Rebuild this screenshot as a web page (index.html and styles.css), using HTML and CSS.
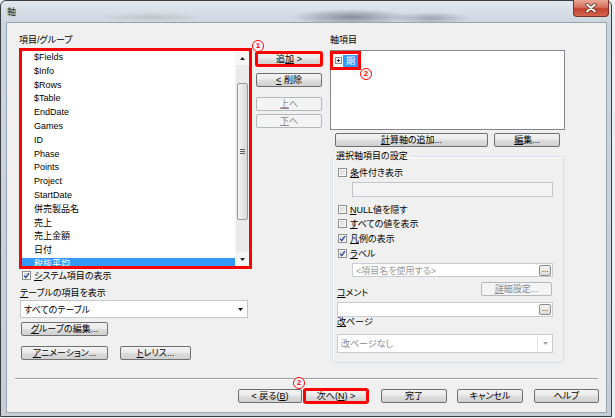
FILE: index.html
```html
<!DOCTYPE html>
<html lang="ja">
<head>
  <meta charset="UTF-8" />
  <meta name="viewport" content="width=device-width, initial-scale=1.0" />
  <title>軸</title>
  <link rel="stylesheet" href="styles.css">
</head>
<body>
  <div class="window">
    <div class="titlebar">
      <span class="title">軸</span>
      <span class="close">
        <svg width="12" height="10" viewBox="0 0 12 10">
          <path d="M2 1.5 L10 8.5 M10 1.5 L2 8.5" stroke="#5a2a22" stroke-width="3.4" stroke-linecap="round"/>
          <path d="M2 1.5 L10 8.5 M10 1.5 L2 8.5" stroke="#fff" stroke-width="1.8" stroke-linecap="round"/>
        </svg>
      </span>
    </div>

    <div class="client">
      <div class="main">
        <!-- 項目リスト -->
        <div class="col-left">
          <div class="label">項目/グループ</div>
          <div class="listbox">
            <ul class="items">
              <li>$Fields</li>
              <li>$Info</li>
              <li>$Rows</li>
              <li>$Table</li>
              <li>EndDate</li>
              <li>Games</li>
              <li>ID</li>
              <li>Phase</li>
              <li>Points</li>
              <li>Project</li>
              <li>StartDate</li>
              <li>併売製品名</li>
              <li>売上</li>
              <li>売上金額</li>
              <li>日付</li>
              <li class="selected">税抜平均</li>
            </ul>
            <div class="vscroll">
              <div class="sb-arrow">
                <svg width="5" height="3" viewBox="0 0 5 3"><path d="M0 3 L2.5 0 L5 3 Z" fill="#222"/></svg>
              </div>
              <div class="sb-track">
                <div class="sb-thumb"><span class="grip"></span></div>
              </div>
              <div class="sb-arrow">
                <svg width="5" height="3" viewBox="0 0 5 3"><path d="M0 0 L2.5 3 L5 0 Z" fill="#222"/></svg>
              </div>
            </div>
          </div>
          <div class="check sys">
            <span class="box"><svg width="7" height="7" viewBox="0 0 7 7"><path d="M1 3.6 L2.8 5.6 L6 1.2" fill="none" stroke="#2d4f9e" stroke-width="1.4"/></svg></span>
            <span><u>シ</u>ステム項目の表示</span>
          </div>
          <div class="label table-label"><u>テ</u>ーブルの項目を表示</div>
          <div class="combo">
            <span>すべてのテーブル</span>
            <svg width="5" height="3" viewBox="0 0 5 3"><path d="M0 0 L2.5 3 L5 0 Z" fill="#111"/></svg>
          </div>
          <button class="btn group-btn"><u>グ</u>ループの編集...</button>
          <div class="btn-row">
            <button class="btn w87"><u>ア</u>ニメーション...</button>
            <button class="btn w71"><u>ト</u>レリス...</button>
          </div>
        </div>

        <!-- 追加・削除 -->
        <div class="col-mid">
          <button class="btn add marked">追<u>加</u> &gt;</button>
          <button class="btn del"><u>&lt;</u> 削除</button>
          <button class="btn up" disabled><u>上</u>へ</button>
          <button class="btn down" disabled><u>下</u>へ</button>
        </div>

        <!-- 軸項目 -->
        <div class="col-right">
          <div class="label">軸項目</div>
          <div class="tree">
            <span class="node">
              <svg class="expander" width="7" height="7" viewBox="0 0 7 7">
                <rect x="0.5" y="0.5" width="6" height="6" fill="#f4f4f4" stroke="#8c8c8c"/>
                <path d="M2 3.5 H5 M3.5 2 V5" stroke="#222" stroke-width="1"/>
              </svg>
              <span class="node-text">期</span>
            </span>
          </div>
          <div class="btn-row calc">
            <button class="btn w153"><u>計</u>算軸の追加...</button>
            <button class="btn w66"><u>編</u>集...</button>
          </div>

          <fieldset class="group">
            <legend>選択軸項目の設定</legend>
            <div class="check g first">
              <span class="box"></span>
              <span><u>条</u>件付き表示</span>
            </div>
            <div class="field disabled"></div>
            <div class="check g null">
              <span class="box"></span>
              <span><u>N</u>ULL値を隠す</span>
            </div>
            <div class="check g all">
              <span class="box"></span>
              <span><u>す</u>べての値を表示</span>
            </div>
            <div class="check g legend-chk">
              <span class="box"><svg width="7" height="7" viewBox="0 0 7 7"><path d="M1 3.6 L2.8 5.6 L6 1.2" fill="none" stroke="#2d4f9e" stroke-width="1.4"/></svg></span>
              <span><u>凡</u>例の表示</span>
            </div>
            <div class="check g legend-chk">
              <span class="box"><svg width="7" height="7" viewBox="0 0 7 7"><path d="M1 3.6 L2.8 5.6 L6 1.2" fill="none" stroke="#2d4f9e" stroke-width="1.4"/></svg></span>
              <span><u>ラ</u>ベル</span>
            </div>
            <div class="field label-field">
              <span class="placeholder">&lt;項目名を使用する&gt;</span>
              <span class="dots">...</span>
            </div>
            <div class="comment-row">
              <span class="label-s"><u>コ</u>メント</span>
              <button class="btn w71" disabled><u>詳</u>細設定...</button>
            </div>
            <div class="field comment-field">
              <span></span>
              <span class="dots">...</span>
            </div>
            <div class="label-s page-label"><u>改</u>ページ</div>
            <div class="combo page-combo">
              <span>改ページなし</span>
              <span class="combo-drop">
                <svg width="5" height="3" viewBox="0 0 5 3"><path d="M0 0 L2.5 3 L5 0 Z" fill="#a0a0a0"/></svg>
              </span>
            </div>
          </fieldset>
        </div>
      </div>

      <div class="sep"></div>

      <div class="footer">
        <button class="btn w64">&lt; 戻る(<u>B</u>)</button>
        <button class="btn w64 next marked">次へ(<u>N</u>) &gt;</button>
        <button class="btn w66 done">完了</button>
        <button class="btn w66 cancel">キャンセル</button>
        <button class="btn w65 help">ヘルプ</button>
      </div>
    </div>

    <span class="callout c1">1</span>
    <span class="callout c2">2</span>
    <span class="callout c3">2</span>
  </div>
</body>
</html>
```

FILE: styles.css
```css
* {
  box-sizing: border-box;
}

body {
  margin: 0;
  background: #eceff2;
  font-family: "Liberation Sans", "Noto Sans CJK JP", sans-serif;
  font-size: 9px;
  color: #000;
  font-feature-settings: "palt" 1;
}

u {
  text-decoration-thickness: 1px;
  text-underline-offset: 1px;
}

/* ---- window frame ---- */
.window {
  position: relative;
  width: 612px;
  height: 417px;
  border: 1px solid #3b3e42;
  border-radius: 6px 6px 0 0;
  padding: 0 4px 3px 5px;
  display: flex;
  flex-direction: column;
  background:
    radial-gradient(ellipse 60px 8px at 350px 16px, rgba(40, 48, 58, 0.45), transparent),
    radial-gradient(ellipse 40px 6px at 430px 17px, rgba(40, 48, 58, 0.3), transparent),
    radial-gradient(ellipse 50px 5px at 150px 16px, rgba(90, 110, 100, 0.18), transparent),
    linear-gradient(#e2e7ed, #cdd5de 22px, #c7ced6);
}

.titlebar {
  height: 21px;
  display: flex;
  justify-content: space-between;
  align-items: flex-start;
}

.title {
  margin: 6px 0 0 1px;
  font-size: 9px;
  line-height: 11px;
  color: #222;
}

.close {
  width: 36px;
  height: 17px;
  margin: -1px -2px 0 0;
  display: flex;
  align-items: center;
  justify-content: center;
  border: 1px solid #7a3328;
  border-top: none;
  border-radius: 0 0 4px 4px;
  background: linear-gradient(#e9a896, #d6705c 45%, #c5402c 55%, #d4664e);
}

/* ---- client area ---- */
.client {
  flex: 1;
  border: 1px solid #9aa4ae;
  background: #f0f0f0;
  padding: 11px 0 0 12px;
  display: flex;
  flex-direction: column;
}

.main {
  display: flex;
  height: 344px;
}

.label {
  height: 12px;
  line-height: 12px;
  white-space: nowrap;
}

.btn {
  font: inherit;
  color: #000;
  height: 14px;
  line-height: 12px;
  padding: 0;
  border: 1px solid #707070;
  border-radius: 2px;
  background: linear-gradient(#f3f3f3, #ebebeb 45%, #dddddd 52%, #d0d0d0);
  text-align: center;
  white-space: nowrap;
}

.btn:disabled {
  border-color: #b4b8bb;
  background: #f4f4f4;
  color: #8a8a8a;
}

.marked {
  outline: 3px solid #f00;
  outline-offset: -2px;
}

.w64 { width: 64px; }
.w65 { width: 65px; }
.w66 { width: 66px; }
.w71 { width: 71px; }
.w87 { width: 87px; }
.w153 { width: 153px; }

/* ---- left column ---- */
.col-left {
  width: 233px;
  display: flex;
  flex-direction: column;
  align-items: flex-start;
}

.listbox {
  margin-top: 2px;
  width: 233px;
  height: 221px;
  border: 3px solid #f00;
  background: #fff;
  display: flex;
}

.items {
  flex: 1;
  list-style: none;
  margin: 0;
  padding: 0;
  overflow: hidden;
}

.items li {
  height: 13.8px;
  line-height: 13.8px;
  padding-left: 12px;
  white-space: nowrap;
}

.items li.selected {
  background: #3399ff;
  color: #fff;
}

.vscroll {
  width: 14px;
  display: flex;
  flex-direction: column;
  background: #ebebeb;
  border-left: 1px solid #f6f6f6;
}

.sb-arrow {
  height: 14px;
  display: flex;
  align-items: center;
  justify-content: center;
  background: #f6f6f6;
}

.sb-track {
  flex: 1;
  padding-top: 18px;
}

.sb-thumb {
  margin: 0 1px;
  height: 137px;
  border: 1px solid #979797;
  border-radius: 2px;
  background: linear-gradient(to right, #f5f5f5, #e4e4e4 60%, #d9d9d9);
  display: flex;
  align-items: center;
  justify-content: center;
}

.grip {
  width: 5px;
  height: 5px;
  background: repeating-linear-gradient(#5c5c5c 0 1px, transparent 1px 2px);
}

.check {
  display: flex;
  align-items: center;
  height: 12px;
  gap: 3px;
  white-space: nowrap;
}

.check .box {
  width: 9px;
  height: 9px;
  border: 1px solid #8e8f8f;
  background: linear-gradient(135deg, #d2d2d2, #f7f7f7);
  box-shadow: inset 0 0 0 1px #fafafa;
  display: flex;
  align-items: center;
  justify-content: center;
}

.check.sys {
  margin-left: 3px;
}

.table-label {
  margin-top: 6px;
  margin-left: 1px;
}

.combo {
  margin: 1px 0 0 1px;
  width: 228px;
  height: 18px;
  border: 1px solid #c4c8cc;
  background: #fff;
  display: flex;
  align-items: center;
  justify-content: space-between;
  padding: 0 4px 0 3px;
}

.group-btn {
  margin: 4px 0 0 2px;
  width: 87px;
}

.btn-row {
  display: flex;
  gap: 12px;
  margin: 10px 0 0 2px;
}

/* ---- middle column ---- */
.col-mid {
  width: 66px;
  margin-left: 4px;
  display: flex;
  flex-direction: column;
}

.col-mid .add { margin-top: 18px; }
.col-mid .del { margin-top: 7px; }
.col-mid .up { margin-top: 10px; }
.col-mid .down { margin-top: 3px; }

/* ---- right column ---- */
.col-right {
  width: 235px;
  margin-left: 8px;
  display: flex;
  flex-direction: column;
}

.tree {
  margin-top: 4px;
  height: 80px;
  border: 1px solid #828790;
  background: #fff;
}

.node {
  display: inline-flex;
  align-items: center;
  width: 31px;
  height: 19px;
  margin-left: -1px;
  border: 3px solid #f00;
  padding-left: 2px;
  gap: 1px;
}

.node-text {
  width: 15px;
  height: 12px;
  line-height: 12px;
  background: #3399ff;
  color: #fff;
  text-align: center;
}

.btn-row.calc {
  margin: 3px 0 0 5px;
  gap: 6px;
}

.group {
  margin: 3px 0 0 2px;
  width: 232px;
  border: 1px solid #d5dfe5;
  border-radius: 3px;
  padding: 0 10px 9px 4px;
  box-shadow: inset 1px 1px 0 #fff;
  display: flex;
  flex-direction: column;
}

.group legend {
  margin-left: -3px;
  padding: 0 2px;
  line-height: 12px;
  white-space: nowrap;
}

.check.g { margin-left: 1px; }
.check.first { margin-top: 4px; }
.check.null { margin-top: 6px; }
.check.all { margin-top: 2px; }
.check.legend-chk { margin-top: 3px; }

.field {
  height: 15px;
  border: 1px solid #c9ccd0;
  background: #fff;
  display: flex;
  align-items: center;
  justify-content: space-between;
  padding: 0 1px 0 3px;
}

.field.disabled {
  margin: 4px 0 0 15px;
  background: #f4f4f4;
  border-color: #c2c5c9;
}

.field.label-field {
  margin: 4px 0 0 15px;
  height: 14px;
}

.placeholder {
  color: #9a9a9a;
}

.dots {
  width: 12px;
  height: 11px;
  line-height: 7px;
  font-size: 8px;
  text-align: center;
  border: 1px solid #8a8a8a;
  border-radius: 2px;
  background: linear-gradient(#f4f4f4, #dcdcdc);
  color: #222;
}

.comment-row {
  margin-top: 5px;
  height: 17px;
  display: flex;
  justify-content: space-between;
}

.label-s {
  line-height: 11px;
  height: 11px;
  white-space: nowrap;
}

.comment-row .label-s {
  align-self: flex-end;
}

.comment-row .btn {
  margin-right: 1px;
}

.field.comment-field {
  margin-top: 3px;
}

.page-combo {
  margin: 6px 0 0 0;
  width: auto;
  height: 19px;
  padding: 0 0 0 3px;
  color: #8a8a8a;
  border-color: #c9ccd0;
}

.combo-drop {
  width: 15px;
  height: 100%;
  border-left: 1px solid #e4e4e4;
  display: flex;
  align-items: center;
  justify-content: center;
}

/* ---- footer ---- */
.sep {
  height: 2px;
  margin: 0 8px 0 -4px;
  border-top: 1px solid #a0a0a0;
  border-bottom: 1px solid #fff;
}

.footer {
  margin-top: 9px;
  padding-right: 7px;
  display: flex;
  justify-content: flex-end;
  gap: 2px;
}

.footer .done { margin-left: 11px; }
.footer .cancel { margin-left: 8px; }
.footer .help { margin-left: 9px; }

/* ---- red callouts ---- */
.callout {
  position: absolute;
  width: 12px;
  height: 12px;
  border: 1.5px solid #f00;
  border-radius: 50%;
  color: #f00;
  font-size: 8px;
  font-weight: bold;
  line-height: 9px;
  text-align: center;
  background: #fff;
}

.c1 { left: 251px; top: 39px; }
.c2 { left: 359px; top: 67px; }
.c3 { left: 292px; top: 376px; }
```
